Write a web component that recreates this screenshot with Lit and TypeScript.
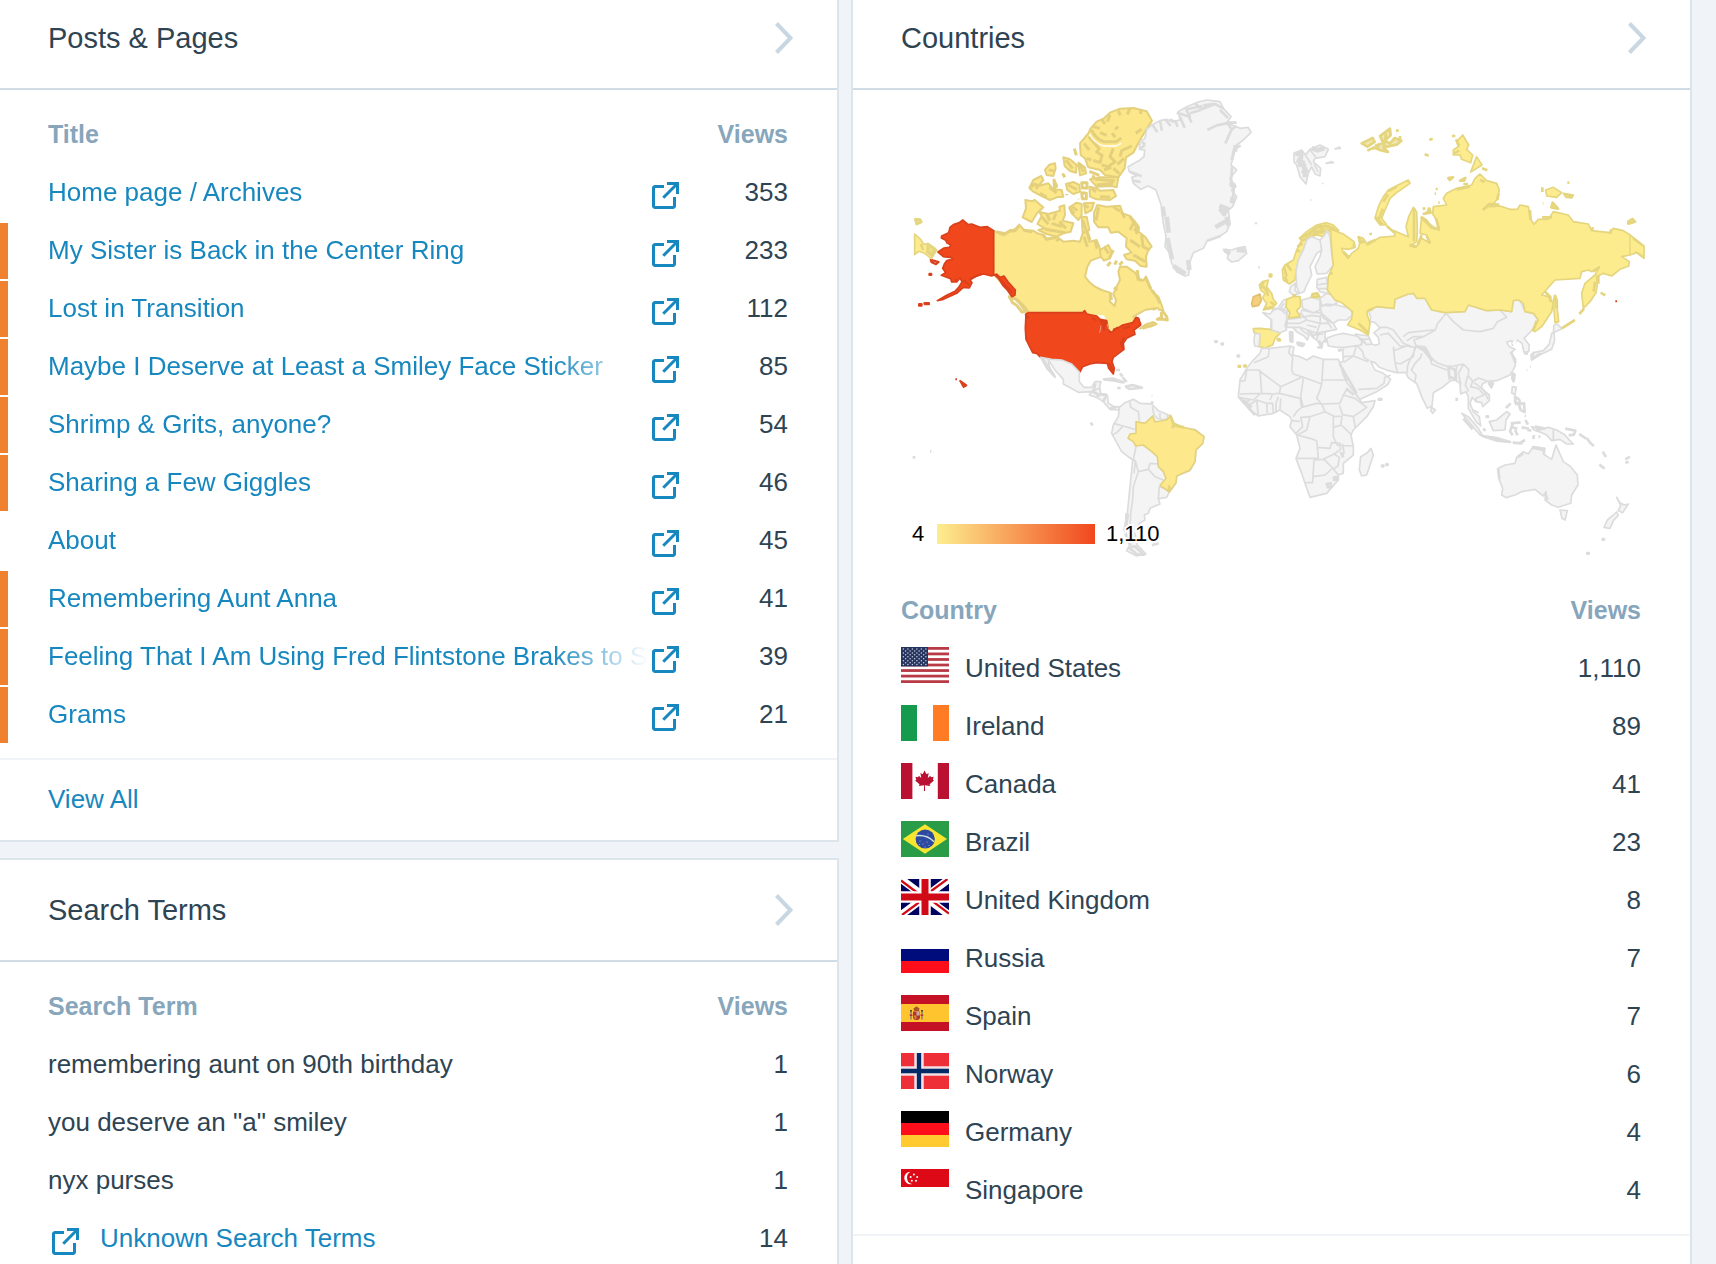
import { LitElement, html, css, svg } from "lit";
import { customElement, property } from "lit/decorators.js";
import { classMap } from "lit/directives/class-map.js";

interface Post { title: string; views: number; highlighted: boolean }
interface Country { name: string; views: string; flag: unknown }
interface Term { term: string; views: number; external?: boolean }

const POSTS: Post[] = [
  { title: "Home page / Archives", views: 353, highlighted: false },
  { title: "My Sister is Back in the Center Ring", views: 233, highlighted: true },
  { title: "Lost in Transition", views: 112, highlighted: true },
  { title: "Maybe I Deserve at Least a Smiley Face Sticker", views: 85, highlighted: true },
  { title: "Shrimp & Grits, anyone?", views: 54, highlighted: true },
  { title: "Sharing a Few Giggles", views: 46, highlighted: true },
  { title: "About", views: 45, highlighted: false },
  { title: "Remembering Aunt Anna", views: 41, highlighted: true },
  { title: "Feeling That I Am Using Fred Flintstone Brakes to S", views: 39, highlighted: true },
  { title: "Grams", views: 21, highlighted: true },
];

const TERMS: Term[] = [
  { term: "remembering aunt on 90th birthday", views: 1 },
  { term: 'you deserve an "a" smiley', views: 1 },
  { term: "nyx purses", views: 1 },
  { term: "Unknown Search Terms", views: 14, external: true },
];

const starRows = Array.from({ length: 9 }, (_, r) =>
  Array.from({ length: r % 2 ? 5 : 6 }, (_, c) => ({ x: 2.4 + c * 4.5 + (r % 2 ? 2.2 : 0), y: 2 + r * 1.95 })),
).flat();

const FLAGS = {
  us: svg`<rect width="48" height="36" fill="#fff"/>
    ${[0, 1, 2, 3, 4, 5, 6].map((i) => svg`<rect y=${i * 5.54} width="48" height="2.77" fill="#b83a46"/>`)}
    <rect width="27" height="19.4" fill="#26355f"/>
    ${starRows.map((s) => svg`<circle cx=${s.x} cy=${s.y} r=".75" fill="#c9cede"/>`)}`,
  ie: svg`<rect width="48" height="36" fill="#fff"/><rect width="16" height="36" fill="#169b4e"/><rect x="32" width="16" height="36" fill="#ff7c25"/>`,
  ca: svg`<rect width="48" height="36" fill="#fff"/><rect width="11.4" height="36" fill="#ba1031"/><rect x="36.8" width="11.2" height="36" fill="#ba1031"/>
    <path fill="#ba1031" d="M23.6 7.6l-2 3.6-2.2-1.1.9 5-2.5-2.3-.7 1.4-2.7-.4.9 3-1.2.7 4.4 3.8-.6 1.7 5.200-.7-.2 5.600h1.200l-.2-5.600 5.300.7-.6-1.700 4.400-3.800-1.200-.7.9-3-2.700.4-.7-1.400-2.500 2.300.9-5-2.200 1.100z"/>`,
  br: svg`<rect width="48" height="36" fill="#2a9c48"/><path d="M24 3.2L46 18 24 32.8 1.8 18z" fill="#f8e52f"/><circle cx="24.2" cy="18" r="9.6" fill="#2d4aa0"/>
    <path d="M15.2 14.8Q26 13.5 33 20.8" fill="none" stroke="#cfe3e0" stroke-width="1.5"/>
    <g fill="#a9b9dc"><circle cx="19" cy="20" r=".6"/><circle cx="22" cy="23" r=".6"/><circle cx="26" cy="21" r=".6"/><circle cx="28" cy="24.5" r=".6"/><circle cx="24" cy="26" r=".5"/><circle cx="18.5" cy="23.5" r=".5"/><circle cx="27" cy="13" r=".5"/></g>`,
  gb: svg`<rect width="48" height="36" fill="#00025f"/>
    <path d="M0 0L48 36M48 0L0 36" stroke="#fff" stroke-width="7.5"/>
    <path d="M0 1.5L24 19.5M48 34.5L24 16.5M46.5 0L24 16.5M1 36L24 19" stroke="#d00b17" stroke-width="2.2"/>
    <path d="M24 0V36M0 18H48" stroke="#fff" stroke-width="11.5"/><path d="M24 0V36M0 18H48" stroke="#d00b17" stroke-width="7"/>`,
  ru: svg`<rect width="48" height="36" fill="#fff"/><rect y="12" width="48" height="12" fill="#000c7b"/><rect y="24" width="48" height="12" fill="#fe0d1b"/>`,
  es: svg`<rect width="48" height="36" fill="#c51126"/><rect y="9" width="48" height="18" fill="#ffc42e"/>
    <path d="M9 16h2v8.5h-2zM20 16h2v8.5h-2z" fill="#a8905f"/><path d="M9 15h2v1.5h-2zM20 15h2v1.5h-2z" fill="#5c4a1c"/>
    <path d="M8.8 19.5h2.6v1.5H8.8zM19.6 19.5h2.6v1.5h-2.6z" fill="#b0303a"/>
    <path d="M12 16.5h7v5.5q0 3-3.5 3t-3.5-3z" fill="#b5303a"/><path d="M15.5 16.5h3.2v4h-3.2z" fill="#c9a9a4"/><path d="M12.5 20.5h3v3.5h-1.5z" fill="#c98a2c"/><path d="M12.5 13.5l3-2.2 3 2.2-.5 2.5h-5z" fill="#a5572b"/>`,
  no: svg`<rect width="48" height="36" fill="#ee2f37"/><path d="M18 0V36M0 18H48" stroke="#f4dfe4" stroke-width="9.5"/><path d="M18 0V36M0 18H48" stroke="#022a66" stroke-width="4.3"/>`,
  de: svg`<rect width="48" height="12" fill="#000"/><rect y="12" width="48" height="12" fill="#fe0d1b"/><rect y="24" width="48" height="12" fill="#ffc930"/>`,
  sg: svg`<rect width="48" height="36" fill="#fff"/><rect width="48" height="18" fill="#de0916"/><path d="M9.5 2.8a6.2 6.2 0 1 0 1.5 12.2 6.6 6.6 0 0 1-1.5-12.2z" fill="#fff"/>
    <g fill="#fff"><circle cx="12.9" cy="5.5" r="1"/><circle cx="9.7" cy="8" r="1"/><circle cx="16.2" cy="8" r="1"/><circle cx="10.8" cy="11.8" r="1"/><circle cx="15" cy="11.8" r="1"/></g>`,
};

const COUNTRIES: Country[] = [
  { name: "United States", views: "1,110", flag: FLAGS.us },
  { name: "Ireland", views: "89", flag: FLAGS.ie },
  { name: "Canada", views: "41", flag: FLAGS.ca },
  { name: "Brazil", views: "23", flag: FLAGS.br },
  { name: "United Kingdom", views: "8", flag: FLAGS.gb },
  { name: "Russia", views: "7", flag: FLAGS.ru },
  { name: "Spain", views: "7", flag: FLAGS.es },
  { name: "Norway", views: "6", flag: FLAGS.no },
  { name: "Germany", views: "4", flag: FLAGS.de },
  { name: "Singapore", views: "4", flag: FLAGS.sg },
];

/* Each region of the map is drawn in its own local grid, three units to a map unit. */
type Shape = [cls: string, d: string];
interface Region { x: number; y: number; shapes: Shape[] }

const dots = (...pts: [number, number][]) => pts.map(([x, y]) => `M${x - 2},${y - 1}h4v2h-4z`).join("");

const REGIONS: Region[] = [
  { x: 1400, y: 320, shapes: [
    ["land", "M-95,-30L-70,-40L-18,-35L-15,-62L25,-78L40,-80L75,-65L95,-30L135,-22L195,-25L205,-45L260,-28L300,-30L335,-25L340,-60L360,-60L375,-25L400,-20L415,0L397,30L385,42L372,55L388,75L386,95L372,97L366,70L352,60L337,76L336,62L320,66L328,80L345,88L333,98L347,118L345,140L330,165L290,182L262,184L247,192L244,205L268,225L268,242L248,260L245,248L228,245L217,232L210,250L220,275L238,290L242,318L228,305L205,265L205,230L198,215L182,222L180,190L165,180L152,182L130,200L100,218L96,258L82,265L65,230L50,190L34,180L24,172L18,158L-10,158L-35,152L-62,142L-75,128L-88,124L-75,150L-50,160L-28,178L-38,195L-70,215L-120,238L-130,228L-148,190L-175,155L-182,130L-170,122L-172,95L-168,80L-115,75L-115,50L-100,50L-95,68L-75,76L-62,72L-65,52L-78,38L-60,24L-75,8L-90,4L-88,-10Z"],
    ["line", "M140,-18L160,5L190,30L240,35L280,25L292,5L320,-8L300,-30M138,-20L112,12L106,30L70,50L42,60L48,78L75,80L90,110L110,128L145,140L160,138L190,132L206,148L205,168L218,184L236,174L262,184M65,100L62,112L45,130L34,150L48,165L44,190M90,110L95,132L140,150M145,140L148,180M170,138L166,178M190,134L175,160L183,195M203,168L196,195L206,215M218,184L212,200L236,206L252,225L228,235L228,246M222,188L250,208L264,238M-64,22L-40,22L-20,30L10,70L40,82M-60,45L-35,40L0,78L18,78M10,50L25,38L95,30L106,30M20,62L40,50L70,50M-20,80L-15,128L-8,156M-20,92L20,78L44,82L40,110L0,132L-12,128M50,78L30,120L22,140L22,158M-172,110L-140,108L-130,75M-140,108L-95,125M-140,108L-170,128M-125,208L-70,205L-48,190L-46,172M-46,172L-28,166M-130,75L-112,95L-108,112L-92,122M220,270L236,278"],
    ["coast", "M145,140L165,150L168,178L148,170ZM50,78L80,90L95,120L70,90Z"],
    ["sea", "M336,70L345,62L350,60L342,78Z"],
    ["land", "M95,262L106,270L98,280L92,272ZM393,105L400,98L430,92L448,72L455,40L462,38L464,60L455,88L430,100L412,104L395,120ZM462,16L472,12L485,26L470,34L460,38ZM337,200L349,202L345,224L335,218ZM185,280L205,290L235,325L248,348L240,345L212,312ZM268,305L290,300L320,275L330,282L318,300L315,330L280,332ZM395,320L425,328L445,322L470,330L495,345L508,360L520,372L500,372L480,358L455,362L440,345L425,338L402,330Z"],
    ["land", "M295,445L315,435L345,430L350,412L370,395L385,402L400,380L435,385L430,402L455,418L468,375L480,402L490,425L512,440L532,465L534,495L515,525L512,550L475,562L455,555L435,540L438,515L430,528L405,508L365,515L345,525L318,533L305,525L308,505L298,480ZM480,570L502,572L495,600L486,595ZM650,532L660,548L672,555L685,552L668,578L655,572L662,556ZM650,576L655,586L640,602L630,625L612,622L622,600L640,585Z"],
    ["coast", "M267,190h12l-5,12zM338,160l6,4l-3,20l-4,-8zM345,230l12,8l5,14l10,-2l2,26l-12,-6l-6,-18l-10,-6zM318,264l14,-14M344,242l6,14M248,348L290,354L330,366L292,362ZM338,368l30,2M355,372l20,-12M332,310l30,-3M338,312l-8,22l8,12M338,322l14,5M345,330l8,16M376,300l8,14M365,322l22,4M382,330l12,2M405,320l30,6M408,330l14,2M496,326l30,6l-4,12l-16,2M538,342l20,14M560,354l12,16l10,8M608,395l10,16M598,434l16,12M676,418l14,-8M676,428l10,-2M170,233v10M435,520l8,20M432,385v16M352,412l18,-12M190,296l28,32M380,150h2M390,140h2M372,100h12M250,325l6,8M402,345l-2,12M415,350h6M378,288h-4M395,382l34,8M294,445l4,32M333,95l14,35M400,98l-4,20l28,-18"],
    ["line", "M460,330v34"],
    ["coast", dots([610, 658], [564, 700], [262, 290])],
  ] },
  { x: 1210, y: 320, shapes: [
    ["land", "M185,-18L190,-35L212,-35L232,-26L250,-40L275,-10L300,-20L330,-15L360,-5L362,18L345,40L345,58L332,78L322,62L308,52L290,30L272,8L255,8L236,18L215,30L182,26Z"],
    ["line", "M232,-26L228,0L240,10M228,0L262,-8L275,-10M250,-5L262,8L290,8L300,-20M290,8L298,30L330,30L360,20M298,30L312,50M330,30L320,58M330,-15L320,10L330,30M275,-10L300,0L325,-5M310,45L340,42M280,12L300,20"],
    ["land", "M248,12L265,12L275,30L297,45L292,60L282,48L260,35L248,22ZM350,55L375,45L400,40L440,48L458,60L452,75L405,82L380,82L355,78ZM436,42L475,48L486,72L470,74L455,62Z"],
    ["line", "M455,55L468,72M448,60L482,56"],
    ["coast", "M262,68l20,4l-4,6l-14,-4zM240,36l7,1l0,28l-6,-2zM322,82h16M326,62l12,16M384,92l12,-3M350,58l-6,10"],
    ["yellow", "M130,26L150,25L180,28L212,38L195,55L188,75L165,84L148,80L150,42L132,38Z"],
    ["land", "M135,40L150,42L147,80L134,78L132,60Z"],
    ["yellowcoast", dots([205, 58], [208, 60], [88, 139], [105, 138])],
    ["land", "M155,85L180,85L240,78L252,82L248,105L270,110L290,120L310,108L340,118L385,118L392,135L400,165L412,190L430,212L450,240L455,248L495,242L490,260L470,290L430,330L423,345L430,380L430,405L400,430L400,460L385,465L385,480L350,520L300,532L285,490L275,460L258,415L270,385L260,345L240,320L245,300L240,290L210,270L190,280L145,288L120,270L85,230L90,180L110,145L130,120L150,100Z"],
    ["line", "M110,150L145,150L212,200L278,170M132,128L175,110L178,86M240,80L236,98L248,112L245,150L250,162L280,172L335,192L340,118M335,180L412,180M335,192L330,210L320,235L335,252M280,175L272,230L280,262M212,200L208,220L270,235M90,222L155,220L150,150M110,150L105,182L90,184M155,220L188,222L208,220M270,235L275,262M212,235L210,270M250,290L260,275L275,262L320,250L335,252L345,275L300,290L275,292M335,252L390,250L400,225L412,205M400,225L435,235L470,262L430,290L398,284L388,256M345,275L375,290L398,288M370,290L370,350L382,376M430,290L436,322M395,316L425,345M368,322L392,316L396,290M300,290L290,330L262,345M272,290L278,320L258,340M246,302L270,304M262,345L300,355L320,362L322,382L325,415L258,415M322,382L360,385L365,368L390,370L392,388L372,402L340,418L312,420L308,488L285,488M310,470L345,465L368,444L342,418M368,444L385,465M372,402L388,412L384,438L372,446M398,372L402,398L396,412M382,376L430,378M118,255L140,240L145,288M140,240L170,250L172,280M170,250L188,250L190,280M205,230L198,250L198,278M86,232L130,240M188,222L180,240M130,240L150,222M96,248L120,242M108,258L122,252"],
    ["coast", "M350,492l12,-2l2,10l-10,2zM372,472h10v8h-10zM392,396l8,16M88,232L135,285M408,205l24,20M100,240L125,262M388,130l52,90"],
    ["land", "M483,385L490,405L470,465L455,468L448,450L452,410L470,400Z"],
    ["coast", dots([18, 65], [37, 72], [85, 108], [518, 438], [531, 434], [508, 238], [512, 238])],
  ] },
  { x: 900, y: 90, shapes: [
    ["canada", "M281,422L310,436L325,424L345,418L358,404L372,420L400,422L412,430L432,436L440,448L470,440L490,455L520,452L540,455L548,430L560,425L568,455L590,450L598,470L606,500L590,505L572,512L562,530L555,560L567,575L585,590L605,600L630,608L630,635L644,648L648,630L640,612L650,590L660,570L655,545L660,530L680,530L705,548L716,565L730,572L738,560L750,590L758,608L775,620L785,645L790,662L765,655L735,660L700,680L722,700L700,712L660,725L640,735L622,728L600,690L560,672L385,668L372,660L358,640L340,622L322,600L281,552Z"],
    ["canada", "M592,345L620,350L660,347L668,370L690,378L705,395L716,410L716,425L735,440L755,470L745,480L738,500L740,530L722,528L705,512L680,508L672,495L695,488L678,470L680,445L655,425L632,428L625,412L595,412L582,395L582,368ZM412,402L425,378L418,366L445,372L480,362L478,350L493,346L495,375L488,392L520,400L512,425L490,430L470,440L440,432L415,420L435,415ZM376,330L396,334L404,330L430,352L412,368L395,396L368,382L378,355ZM508,352L530,338L545,342L545,375L535,390L515,370ZM552,340L582,338L575,360L556,370ZM545,382L560,380L568,420L548,428ZM388,294L400,270L424,258L430,270L415,288L445,280L460,298L485,300L490,320L470,322L450,330L425,318L400,305ZM435,240L448,224L465,220L467,235L460,258L440,255ZM490,202L510,208L530,225L528,248L510,243L494,228ZM535,218L555,232L558,250L540,256ZM498,282L520,276L538,285L540,305L520,312L502,300ZM568,290L590,295L600,302L640,300L648,318L630,330L590,328L570,320ZM570,268L600,262L655,262L650,292L635,288L590,290ZM600,480L625,465L635,485L630,505L612,512L602,500Z"],
    ["canada", "M572,115L590,95L612,85L630,68L660,56L700,54L740,64L756,92L738,120L720,150L700,188L678,202L674,235L655,262L615,255L600,240L565,232L555,205L542,195L540,160L565,130Z"],
    ["canadacoast", "M574,120Q590,150 612,155L648,155L664,144M566,140L580,156L598,176L590,186L606,196L600,218L580,211M640,175L630,200L645,215L625,230L605,225M695,168L665,182L660,200M580,110l20,5M605,88l10,14M630,75l-8,20M655,62l6,14M690,55l-8,18M722,60l0,12M725,118l-18,12M612,240l22,-8M552,160l16,20M560,205l14,5M672,205l-20,18M640,235l18,16M600,128l20,8M636,130l10,12M655,110l-10,8M568,244l30,12M425,380l20,22M440,372l10,20M455,400l30,10M468,370l-8,20M478,395l20,20M436,418l60,10M430,436l10,12l28,-6M468,452l10,-6M508,352l14,20M516,350l16,12M552,345l14,8M548,390l10,30M552,440l10,30M585,452l6,24M570,450l-10,-30M596,352l-8,40M690,380l20,30l-6,14M715,410l-6,22M725,435l4,35l20,10M700,400l-10,20M640,350l20,14M664,364l10,20M392,292l12,-10l10,5l-6,10M420,310l20,12M448,292l22,16M446,240l16,2M498,210l20,26M505,285l26,14M540,222l10,24M545,278h16v16h-14zM545,308l14,2v16h-12zM462,270l8,18l-6,6zM488,250l6,12M523,176l6,20M500,312v4M535,326v2M576,258l8,4M574,295l14,10M600,320l30,2M590,285l50,-5M585,268l60,4M700,495l36,20M690,450l30,20M612,470l14,20M640,480l-12,24M632,516l-10,12M650,512l-6,12M668,515l-10,10M712,540l4,28l12,4M736,560l16,36M325,424l20,-2l12,-14M290,426l30,6M370,420l26,6M632,608l2,22M642,592l10,8M715,572l-4,-20M318,430l16,-10M756,600l14,20l10,20"],
    ["white", "M568,132Q585,162 612,168L648,168L664,160"],
    ["canadacoast", "M328,620L350,628L372,650L382,664L366,666L350,646L338,638Z"],
    ["red", "M281,422L262,410L240,412L215,402L205,404L188,390L178,398L160,404L150,412L146,428L125,438L124,444L136,450L142,460L152,464L148,472L132,474L114,486L130,500L156,503L157,508L140,512L133,522L128,535L137,548L124,556L140,562L152,566L155,576L170,576L180,564L186,576L176,592L165,604L140,616L112,632L130,628L170,610L190,592L208,594L216,578L210,570L232,556L250,552L275,558L290,552L300,562L312,558L326,578L346,600L345,615L336,620L322,600L310,588L296,566L281,552Z"],
    ["redcoast", "M92,509L116,516L108,523L94,516ZM88,551h6v4h-6zM57,642h8v5h-8zM73,639h14v4h-13zM300,568l22,24l16,16M210,566l36,-14M165,568l6,6M190,570l18,16"],
    ["yellow", "M44,432L62,448L72,464L84,460L110,480L94,506L74,490L56,484L44,494Z"],
    ["yellowcoast", "M46,388L60,389L64,396L50,402ZM84,464l20,12l-8,20l-14,-10zM62,462l8,18"],
  ] },
  { x: 900, y: 300, shapes: [
    ["canada", "M720,86L742,72L752,80L770,72L760,66L735,74Z"],
    ["canadacoast", "M742,74L730,84L755,76L768,70M772,58L785,52L784,40L790,36L800,50L802,60L790,58ZM758,28l20,-2"],
    ["sea", "M592,44L612,46L618,60L600,54ZM735,56L752,36L775,26L768,44L745,60Z"],
    ["red", "M378,42L385,38L548,38L554,32L560,42L590,48L600,58L620,62L625,88L632,98L668,75L698,68L708,52L716,55L722,75L702,90L705,103L680,115L670,130L672,148L640,172L636,185L643,205L640,222L626,205L622,190L590,188L570,192L548,200L540,216L528,212L515,192L500,195L485,180L455,178L422,172L410,160L398,158L378,118L376,85Z"],
    ["redcoast", "M575,54l14,6M600,62l16,4l-4,26M606,72l-8,20M672,112l-10,18l8,18M376,42l10,14M628,190l10,22M690,80l-20,5M655,82l-16,8"],
    ["lake", "M603,76l-4,22M622,72l4,16"],
    ["redcoast", "M181,243L199,256L191,261ZM166,238h5M178,243h4"],
    ["land", "M422,172L455,178L485,180L515,192L538,216L538,245L552,262L575,262L585,245L603,245L598,265L575,275L535,277L490,252L490,238L465,210L444,178L448,200L466,232L440,205ZM568,285L575,274L600,265L602,280L622,285L625,310L645,322L658,320L655,330L630,328L610,305L590,292Z"],
    ["coast", "M612,238L640,236L670,247L640,241ZM678,260l20,-5l28,8l-38,4zM652,264h10M648,210h12M660,220l8,10M668,232l12,14M428,176l36,54M586,250l-4,20M575,274l22,10l24,0M590,290l14,-8M608,306l12,-20M738,312h18M755,286h2M572,368l6,8M38,472h8M90,454h4M948,125h4M630,326l20,-6M756,736l20,-6M755,312l3,-8"],
    ["land", "M658,322L675,308L700,298L720,310L755,312L775,332L808,346L820,372L850,385L885,388L912,410L908,430L888,450L885,485L870,512L830,528L828,548L808,576L800,592L775,596L780,612L750,625L745,640L733,645L735,660L720,668L705,700L712,735L738,762L710,768L680,752L690,735L672,690L682,640L690,560L698,480L665,455L635,400L640,375L655,350Z"],
    ["line", "M700,480L708,440L700,425M698,480L706,482L715,515L745,508L750,490L772,492M745,508L765,530L790,540M778,560L800,568M778,560L775,598M715,515L700,560L698,600L692,640L690,700L692,735M640,370L670,378L705,388M690,305L692,322L715,335L718,362M757,320L762,345L775,358M780,340V358L800,358M802,344v14M636,404L650,398L668,380M706,482L702,520"],
    ["coast", "M680,640L676,700L690,735M684,740L712,764L732,764L706,740M676,700l8,-60M692,740h20"],
    ["brazil", "M708,365L735,370L758,348L765,366L800,360L812,346L822,370L850,382L885,390L912,410L908,430L888,450L885,485L870,510L830,528L828,548L808,576L780,556L798,535L790,515L775,500L772,470L755,455L730,435L708,438L700,425L684,415L690,402L708,400Z"],
    ["yellowcoast", "M812,350l10,26l-6,8M822,376l30,6M806,556l4,12l-8,2"],
  ] },
  { x: 1120, y: 90, shapes: [
    ["land", "M24,230L60,210L72,200L74,180L58,178L60,155L75,145L80,118L95,105L120,92L140,88L158,95L180,90L175,65L200,50L235,36L260,30L300,35L310,55L333,80L320,98L360,115L385,112L393,127L370,150L350,165L340,200L333,225L350,240L330,265L348,290L335,300L350,320L338,350L325,360L330,400L320,425L300,438L262,452L250,475L220,488L210,515L206,555L195,558L170,545L155,520L150,490L135,470L138,440L130,400L125,350L108,300L85,288L62,298L40,280L35,262L50,258L28,245ZM310,478L335,480L350,475L375,470L380,490L355,512L335,516L322,505L325,492Z"],
    ["coast", "M262,120L290,106L330,98M316,160L335,118L350,108M332,115l-8,-14M98,105l14,22M120,94l6,28M136,88l16,20M165,90l8,20M180,80l14,34M170,68l40,12l-12,-22l50,-10M205,78l10,20M225,40l20,18l40,-16l26,14M320,98h30M345,165l-10,45M350,165l-2,20M336,230l-4,60M342,290l-4,50M30,245l35,14M38,272l24,4M66,155l10,10M60,176l14,-10M150,88l14,8M352,172l10,-6M262,452l40,-14M210,70l32,-10M250,46l30,-4M300,60l24,24"],
    ["thick", "M298,348L322,356L312,372L300,356M286,412L318,394M140,380L146,428M142,444L156,508M160,528L196,552M205,510L208,540M320,380L326,408M314,480L330,492M350,480L376,482M128,350L132,380M338,320L336,340M340,280v14"],
    ["land", "M522,190L545,180L556,195L570,178L600,165L625,178L615,200L585,205L580,215L602,235L600,258L585,252L575,230L565,250L558,282L540,260L530,225L522,215Z"],
    ["thick", "M526,192L544,192L540,225L552,225L556,262M530,210l24,10M575,175l18,6l20,-6M546,250l18,-12"],
    ["line", "M556,195L575,225M570,180L590,205M582,220l12,26M645,177l14,-6l2,4zM618,220l18,-5l4,3zM606,280h4M571,330h4M404,400h8M414,532h6"],
    ["yellow", "M487,540L495,525L520,510L530,480L545,450L538,445L560,425L590,405L620,398L640,405L656,422L640,430L625,420L610,440L590,435L575,440L560,450L550,480L535,510L528,545L525,570L508,582L490,570Z"],
    ["yellowcoast", "M540,445l26,-14l26,-20l28,-4l20,8l10,10M545,452l24,-10l20,-14l26,-6M600,405l10,20M580,415l6,14M492,530l8,30M500,522l14,20M530,482l10,2M494,560l8,16M532,470l16,-10"],
    ["land", "M575,440L600,450L605,480L590,490L570,530L575,555L560,585L552,605L538,610L530,590L528,545L535,510L550,480L560,450ZM610,440L622,422L630,440L635,490L640,525L620,550L592,552L585,530L600,500L605,480L600,450ZM592,568L620,562L622,580L635,600L625,612L600,605L590,592ZM600,625L622,608L645,620L650,640L630,648L605,645ZM600,652L620,642L650,645L690,655L698,675L680,690L655,690L640,700L610,684ZM545,630L575,622L600,630L600,660L580,668L548,655ZM508,604L512,590L525,580L525,600L534,612L520,616ZM474,655L490,630L500,628L500,650L490,658ZM428,668L450,672L458,662L475,655L500,672L500,690L495,705L500,720L480,728L455,720L455,690ZM545,660L580,668L602,668L640,700L650,718L590,730L540,712L500,712L502,688L540,684Z"],
    ["line", "M590,585L622,580M540,700L560,690L600,700L602,672M560,690L545,672M500,700L540,700M590,730L600,700L625,700M545,682L575,676L600,680M482,655L492,640M560,705L590,712M620,690L635,715M594,596h30"],
    ["yellow", "M500,628L520,620L540,620L542,650L530,662L540,680L505,684L510,668L498,650ZM428,575L445,570L440,590L455,610L460,628L470,640L455,655L430,660L440,640L428,625L435,610L422,600L418,585Z"],
    ["yellowcoast", "M578,612l14,-2l6,11h-23zM449,554h5v5h-5zM420,580l20,20l4,18M430,574l-6,22M452,635l10,10M432,656l26,-4M518,616h10"],
    ["ireland", "M395,642L400,620L420,612L424,632L416,646L398,650Z"],
  ] },
  { x: 1280, y: 110, shapes: [
    ["yellow", "M152,358L190,372L222,395L225,412L205,418L185,415L192,432L205,445L215,430L235,415L240,395L235,380L250,385L262,405L300,382L345,378L342,362L385,380L378,350L386,320L400,292L410,305L412,360L410,395L390,408L408,412L425,385L450,400L440,375L420,370L425,320L440,330L455,350L478,360L470,330L458,312L460,290L500,285L490,265L500,250L530,235L575,225L585,205L600,192L620,212L650,220L658,240L650,270L632,290L660,288L690,298L712,298L720,285L745,290L750,325L762,343L775,328L805,328L820,305L865,315L880,335L925,342L935,362L990,368L1000,355L1030,362L1050,375L1092,408L1092,445L1070,428L1050,435L1025,440L1048,455L1046,468L1020,478L995,498L970,490L950,500L952,525L948,548L930,575L910,595L905,550L915,520L945,495L958,470L935,485L925,480L905,485L900,505L825,510L785,555L805,560L820,580L815,605L785,650L765,665L757,660L775,630L760,610L735,605L730,580L715,570L700,572L695,605L660,600L620,602L565,585L555,605L495,608L455,600L435,565L410,565L400,550L385,552L345,568L342,595L290,590L262,602L262,615L270,640L265,675L240,660L203,645L215,625L218,605L185,578L165,570L142,540L145,500L160,465L155,420Z"],
    ["yellow", "M285,325L295,290L310,260L325,240L360,222L385,210L390,220L350,248L330,265L315,300L305,325L320,345L300,345ZM548,75L566,105L560,118L578,135L572,158L545,148L540,135L520,135L520,120L535,110L530,95ZM590,140L606,165L572,186L582,160ZM797,240L820,232L845,248L830,262L800,258ZM850,250L880,255L875,264L858,262ZM825,555L832,570L832,600L836,635L825,638L822,600L820,570Z"],
    ["yellowcoast", "M245,100L278,84L284,96L262,110ZM262,122l20,-10l12,6M300,78l30,-22l2,20l-18,16l16,8l14,-16l20,8l-14,12l-40,8l14,14l-26,-6l-10,-14l22,-6zM318,70l-6,40M348,62h8M300,100l-10,20M360,78v16M295,330l14,-34M310,275l14,-22M325,244l26,-14M288,322l20,22M388,405l20,4M402,294l0,100M422,322l16,14l18,18l24,4M432,292v8M448,292l-4,16M428,312l24,-4l-4,-14M468,325l8,30M425,375l-12,30M440,378l10,22M530,238l40,-8M550,222h14M600,210l14,6M656,250l-4,20M608,300l20,-18l30,2M448,90l10,-4M434,133l12,4M516,78h10M528,88l10,20M522,130l16,-8M606,175l16,6M505,204l14,-2l-10,8zM540,212l16,-8l-4,8zM467,237h6M464,251h4M475,278h4M787,232v14M818,278l16,18l-20,-4zM862,218h6M858,255l20,4M788,280h2M1045,335l12,-8l8,8l-20,6zM845,655L885,630M898,612l14,-16M962,548l14,8M955,495v26M935,362l4,-10M990,372l4,-14M236,380l4,18l16,-4M268,372h8M320,348l24,20M262,400l24,-10M190,425l16,16M222,400v12M750,300l2,30M786,322h30M795,545l16,16l0,14M825,555l4,40M770,632l-10,30M938,485l20,-12M235,640l30,28M945,515l-4,30M150,490h8M265,602l14,-6"],
    ["yellowline", "M1050,378v58M1058,386l30,22M1066,424l22,14"],
    ["redcoast", "M1006,574h5"],
  ] },
];

@customElement("world-map")
export class WorldMap extends LitElement {
  static styles = css`
    :host { display: block; }
    .map { display: block; width: 100%; height: auto; }
    path { stroke-width: 5; stroke-linejoin: round; }
    .land { fill: #f4f4f4; stroke: #dcdcdc; }
    .line { fill: none; stroke: #dcdcdc; }
    .coast { fill: #dcdcdc; fill-opacity: 0; stroke: #dcdcdc; stroke-width: 8; }
    .thick { fill: none; stroke: #dcdcdc; stroke-width: 14; }
    .yellow { fill: #fdec8e; stroke: #e4d57e; }
    .yellowcoast { fill: #e4d57e; fill-opacity: 0.6; stroke: #e4d57e; stroke-width: 8; }
    .yellowline { fill: none; stroke: #e4d57e; stroke-width: 4; }
    .canada { fill: #fde78b; stroke: #e4d07c; stroke-width: 6; }
    .canadacoast { fill: none; stroke: #e4d07c; stroke-width: 9; }
    .brazil { fill: #fde98c; stroke: #e4d27e; }
    .ireland { fill: #f5cf7c; stroke: #e2bf70; }
    .red { fill: #f1471d; stroke: #da401b; }
    .redcoast { fill: #da401b; fill-opacity: 0.6; stroke: #da401b; stroke-width: 6; }
    .sea { fill: #fff; }
    .white { fill: none; stroke: #fff; stroke-width: 4; }
    .lake { fill: none; stroke: #f0a08a; stroke-width: 3; }
    .legend { font: 22px "Liberation Sans", Arial, sans-serif; fill: #000; stroke: #fff; stroke-width: 4; paint-order: stroke; }
  `;

  render() {
    return html`<svg class="map" viewBox="853 90 837 493" role="img" aria-label="Views by country">
      <defs><linearGradient id="scale"><stop offset="0" stop-color="#fdee8e" /><stop offset="1" stop-color="#f1471d" /></linearGradient></defs>
      ${REGIONS.map((r) => svg`<g transform="translate(${r.x} ${r.y}) scale(0.33333)">${r.shapes.map(([c, d]) => svg`<path class=${c} d=${d} />`)}</g>`)}
      <rect x="937" y="524" width="158" height="20" fill="url(#scale)" />
      <text class="legend" x="912" y="541">4</text>
      <text class="legend" x="1106" y="541">1,110</text>
    </svg>`;
  }
}

const base = css`
  a { color: #1787bf; text-decoration: none; }
  a:hover { color: #56b4e0; }
`;

const externalIcon = svg`<svg class="external" viewBox="3 3 18 18" aria-hidden="true"><path fill="currentColor" d="M19 13v6c0 1.105-.895 2-2 2H5c-1.105 0-2-.895-2-2V7c0-1.105.895-2 2-2h6v2H5v12h12v-6h2zM13 3v2h4.586l-7.793 7.793 1.414 1.414L19 6.414V11h2V3h-8z"/></svg>`;

@customElement("stats-card")
export class StatsCard extends LitElement {
  @property() heading = "";

  static styles = [base, css`
    :host { display: block; box-sizing: border-box; background: #fff; border: 2px solid #dce5ec; }
    .header { display: flex; align-items: center; justify-content: space-between; height: 100px; padding: 0 44px 0 48px; border-bottom: 2px solid #d0dce5; }
    .heading { margin: 0; font-size: 29px; font-weight: 400; color: #2e4453; }
    .more { display: block; color: #c8d7e1; }
    .chevron { display: block; width: 18px; height: 32px; }
  `];

  render() {
    return html`
      <header class="header">
        <h2 class="heading">${this.heading}</h2>
        <a class="more" href="#" aria-label="${this.heading} details">
          <svg class="chevron" viewBox="0 0 18 32"><path d="M1.5 1.5L15.500 16L1.500 30.500" fill="none" stroke="currentColor" stroke-width="4" /></svg>
        </a>
      </header>
      <slot></slot>`;
  }
}

@customElement("app-root")
export class AppRoot extends LitElement {
  static styles = [base, css`
    :host { display: block; height: 100vh; overflow: hidden; background: #f0f4f8; color: #2e4453; font: 26px/54px "Liberation Sans", Arial, sans-serif; }
    .board { display: grid; grid-template-columns: repeat(2, minmax(0, 1fr)); gap: 12px; min-height: calc(100% + 28px); margin: -14px 24px 0 -2px; }
    .column { display: flex; flex-direction: column; gap: 16px; }
    .fill { flex: 1; }
    .table { width: 100%; table-layout: fixed; border-collapse: collapse; }
    .list { padding: 17px 0 13px; }
    .countries { padding: 0 0 13px; }
    th, td { height: 54px; padding: 0 0 4px; text-align: left; vertical-align: top; font-weight: 400; }
    th:first-child, td:first-child { padding-left: 48px; }
    thead th { font-size: 25px; font-weight: 700; color: #87a6bc; }
    .views { width: 104px; padding-right: 49px; text-align: right; }
    .action { width: 36px; }
    .title-link { display: block; overflow: hidden; white-space: nowrap; mask-image: linear-gradient(to right, #000 calc(100% - 96px), transparent); }
    .highlighted .title { background: linear-gradient(#f0812e, #f0812e) 0 0 / 8px 56px no-repeat; }
    .external { display: block; width: 27px; height: 27px; flex: none; }
    .open { display: block; padding: 17px 0 0 4px; }
    .unknown { display: flex; gap: 21px; }
    .unknown .external { margin: 17px 0 0 4px; }
    .country { display: flex; gap: 16px; }
    .flag { display: block; width: 48px; height: 36px; margin-top: 6px; }
    .footer { padding: 0 48px 2px; border-top: 2px solid #f0f4f8; line-height: 78px; }
    .end { border-top: 2px solid #f0f4f8; }
  `];

  render() {
    return html`
      <main class="board">
        <div class="column">
          <stats-card heading="Posts &amp; Pages">
            <div class="list">
              <table class="table">
                <thead><tr><th scope="col">Title</th><th class="action"></th><th class="views" scope="col">Views</th></tr></thead>
                <tbody>
                  ${POSTS.map((p) => html`<tr class=${classMap({ highlighted: p.highlighted })}>
                    <td class="title"><a class="title-link" href="#">${p.title}</a></td>
                    <td class="action"><a class="open" href="#" aria-label="Open ${p.title}">${externalIcon}</a></td>
                    <td class="views">${p.views}</td>
                  </tr>`)}
                </tbody>
              </table>
            </div>
            <div class="footer"><a href="#">View All</a></div>
          </stats-card>
          <stats-card class="fill" heading="Search Terms">
            <div class="list">
              <table class="table">
                <thead><tr><th scope="col">Search Term</th><th class="views" scope="col">Views</th></tr></thead>
                <tbody>
                  ${TERMS.map((t) => html`<tr>
                    <td>${t.external ? html`<a class="unknown" href="#">${externalIcon}<span>${t.term}</span></a>` : t.term}</td>
                    <td class="views">${t.views}</td>
                  </tr>`)}
                </tbody>
              </table>
            </div>
          </stats-card>
        </div>
        <div class="column">
          <stats-card class="fill" heading="Countries">
            <world-map></world-map>
            <div class="countries">
              <table class="table">
                <thead><tr><th scope="col">Country</th><th class="views" scope="col">Views</th></tr></thead>
                <tbody>
                  ${COUNTRIES.map((c) => html`<tr>
                    <td><div class="country"><svg class="flag" viewBox="0 0 48 36" aria-hidden="true">${c.flag}</svg><span>${c.name}</span></div></td>
                    <td class="views">${c.views}</td>
                  </tr>`)}
                </tbody>
              </table>
            </div>
            <div class="end"></div>
          </stats-card>
        </div>
      </main>`;
  }
}
